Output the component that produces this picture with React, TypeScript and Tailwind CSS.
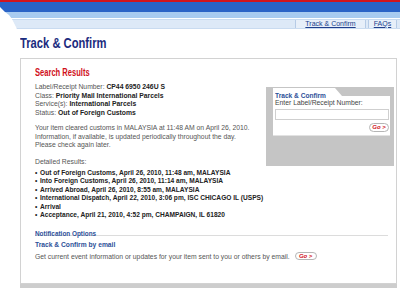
const narrow = "inline-block origin-left whitespace-nowrap font-bold";

function GoButton({ className = "" }: { className?: string }) {
  return (
    <button
      type="button"
      className={`flex items-center justify-center rounded-full border border-[#b5b5b5] bg-white text-[6px] font-bold italic leading-none text-[#d0101a] ${className}`}
    >
      Go &gt;
    </button>
  );
}

function Header() {
  return (
    <div className="relative h-[29px] [clip-path:polygon(0_0,100%_0,100%_100%,17px_100%,12px_19px,9px_15px,5px_12px,0_7px)]">
      <div className="h-[2px] bg-[#d3141c]" />
      <div className="h-[10px] bg-[#2a63c6]" />
      <div className="h-[6px] bg-[#a8cbf0]" />
      <div className="h-[1px] bg-white" />
      <div className="flex h-[10px] justify-end border-y border-[#c9dbf0] bg-[#dde9f7] pr-[3px]">
        <a className="flex w-[71px] items-center justify-center border-x border-[#b6cbe6] bg-[#e7eff9] text-[7px] text-[#203f8c] underline">
          Track &amp; Confirm
        </a>
        <a className="ml-[2px] flex w-[29px] items-center justify-center border-x border-[#b6cbe6] bg-[#e7eff9] text-[7px] text-[#203f8c] underline">
          FAQs
        </a>
      </div>
    </div>
  );
}

function QuickTrack() {
  return (
    <div className="mt-[10px] w-[128px] shrink-0 bg-[#c5c5c5] pb-[4px] pl-[7px] pr-[4px] pt-[1px]">
      <div className="bg-white pb-[4px] pl-[2px] pr-[1px] [clip-path:polygon(0_0,62px_0,69px_8px,100%_8px,100%_100%,0_100%)]">
        <div className="h-[9px] leading-[9px]">
          <span className={`${narrow} scale-x-[0.88] text-[7.5px] text-[#2c4f98]`}>Track &amp; Confirm</span>
        </div>
        <div className="mt-[2px] text-[6.8px] leading-[8.5px] text-[#444]">Enter Label/Receipt Number:</div>
        <div className="mt-[1px] h-[11px] w-[114px] border border-[#cfcfcf] bg-white" />
        <div className="mt-[3px] flex justify-end">
          <GoButton className="h-[9px] w-[20px]" />
        </div>
      </div>
    </div>
  );
}

export default function App() {
  const events = [
    "Out of Foreign Customs, April 26, 2010, 11:48 am, MALAYSIA",
    "Into Foreign Customs, April 26, 2010, 11:14 am, MALAYSIA",
    "Arrived Abroad, April 26, 2010, 8:55 am, MALAYSIA",
    "International Dispatch, April 22, 2010, 3:06 pm, ISC CHICAGO IL (USPS)",
    "Arrival",
    "Acceptance, April 21, 2010, 4:52 pm, CHAMPAIGN, IL 61820",
  ];

  return (
    <div className="h-[291px] w-[400px] overflow-hidden bg-white font-['Liberation_Sans',Arial,sans-serif] text-[#555]">
      <Header />

      <h1 className="ml-[20px] mt-[7px] h-[14px] leading-[14px]">
        <span className={`${narrow} scale-x-[0.8] text-[14px] text-[#1b2b7e]`}>Track &amp; Confirm</span>
      </h1>

      <div className="ml-[20px] mr-[3px] mt-[8px] h-[226px] border border-[#d2d2d2] bg-white pl-[14px] pr-[2px] pt-[6px] shadow-[0_4px_0_#cdcdcd]">
        <h2 className="h-[12px] leading-[12px]">
          <span className={`${narrow} scale-x-[0.72] text-[10.5px] text-[#d0101a]`}>Search Results</span>
        </h2>

        <div className="flex gap-[10px]">
          <div className="mt-[6px] min-w-0 flex-1 text-[6.8px] leading-[8.5px]">
            <div>
              Label/Receipt Number: <span className="font-bold text-[#222]">CP44 6950 246U S</span>
            </div>
            <div>
              Class: <span className="font-bold text-[#222]">Priority Mail International Parcels</span>
            </div>
            <div>
              Service(s): <span className="font-bold text-[#222]">International Parcels</span>
            </div>
            <div>
              Status: <span className="font-bold text-[#222]">Out of Foreign Customs</span>
            </div>

            <p className="mt-[7px]">
              Your item cleared customs in MALAYSIA at 11:48 AM on April 26, 2010.
              <br />
              Information, if available, is updated periodically throughout the day.
              <br />
              Please check again later.
            </p>

            <p className="mt-[8px]">Detailed Results:</p>
          </div>
          <QuickTrack />
        </div>

        <ul className="mt-[2.5px] text-[6.6px] font-bold leading-[8.5px] text-[#222]">
          {events.map((e) => (
            <li key={e} className="flex">
              <span className="w-[5px]">•</span>
              {e}
            </li>
          ))}
        </ul>

        <div className="mr-[6px] mt-[6px] h-[10px] border-b border-[#dcdcdc] leading-[9px]">
          <span className={`${narrow} scale-x-[0.8] text-[8px] text-[#2c4f98]`}>Notification Options</span>
        </div>
        <div className="mt-[4px] text-[6.7px] font-bold leading-[9px] text-[#2c4f98]">Track &amp; Confirm by email</div>
        <div className="mt-[3px] flex h-[9px] items-center text-[6.8px] leading-[9px]">
          Get current event information or updates for your item sent to you or others by email.
          <GoButton className="ml-[5px] h-[8px] w-[22px]" />
        </div>
      </div>
    </div>
  );
}
